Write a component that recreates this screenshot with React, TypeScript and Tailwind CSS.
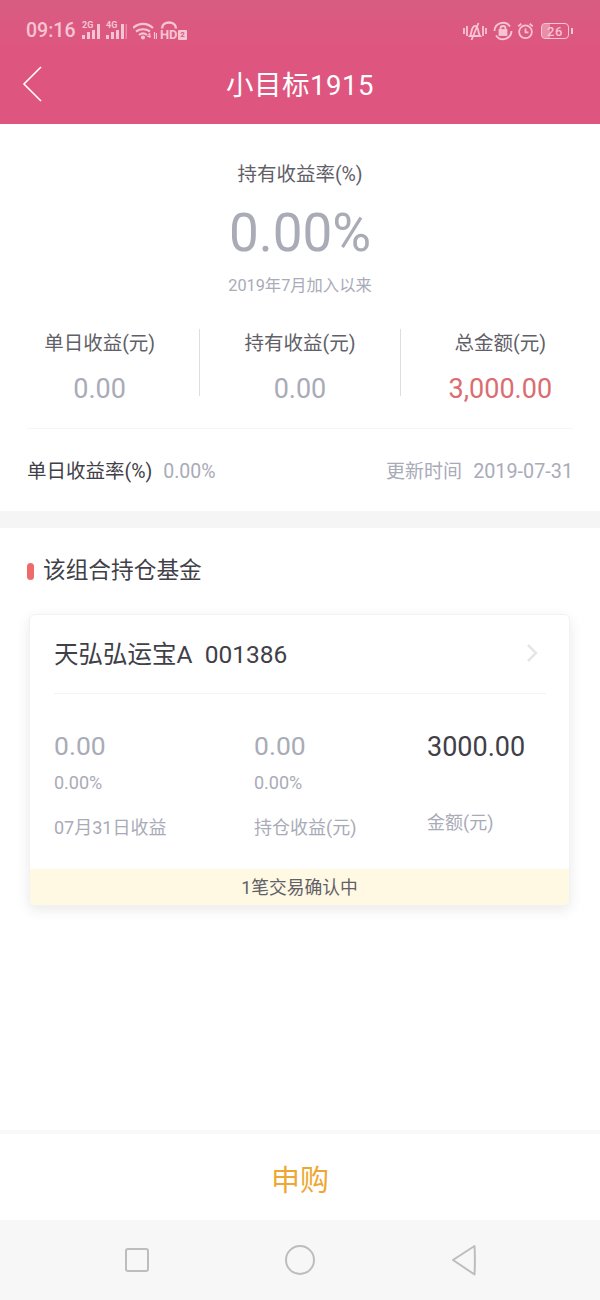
const sans = "font-['Roboto','Noto_Sans_CJK_SC',sans-serif]";

const StatCol = ({ label, value, valueColor }: { label: string; value: string; valueColor: string }) => (
  <div className="flex-1 flex flex-col items-center pt-[1px]">
    <div className="text-[19.5px] leading-[28px] text-[#5f6068]">{label}</div>
    <div className={`mt-[16px] text-[27px] leading-[30px] ${valueColor}`}>{value}</div>
  </div>
);

const StatusBars = ({ tag, spare }: { tag: string; spare?: boolean }) => (
  <div className="relative w-[21px] h-[18px]">
    <span className="absolute left-0 top-[-2px] text-[9px] leading-[10px] font-bold text-[#f6c5d3]">{tag}</span>
    <svg viewBox="0 0 21 18" className="absolute inset-0 w-[21px] h-[18px]" fill="#f6c5d3">
      <rect x="0" y="13" width="3" height="4" />
      <rect x="5" y="10" width="3" height="7" />
      <rect x="10" y="8" width="3" height="9" />
      <rect x="15" y="2" width="3" height="15" />
      {spare && <rect x="19.500" y="2" width="1.500" height="15" opacity="0.45" />}
    </svg>
  </div>
);

const App = () => {
  return (
    <div className={`w-[600px] h-[1300px] bg-white flex flex-col overflow-hidden ${sans}`}>
      {/* Status bar + title */}
      <div className="h-[124px] bg-[#de567f] shrink-0 flex flex-col">
        <div className="h-[50px] pl-[26px] pr-[27px] pt-[20px] flex justify-between items-start bg-linear-to-b from-[#d85c82] to-[#de567f]">
          <div className="flex items-center h-[22px]">
            <span className="w-[49px] text-[19.5px] leading-[22px] font-medium text-[#f6c5d3]">09:16</span>
            <div className="ml-[7px]"><StatusBars tag="2G" /></div>
            <div className="ml-[3px]"><StatusBars tag="4G" spare /></div>
            <div className="relative ml-[6px] w-[24px] h-[18px]">
              <svg viewBox="0 0 24 18" className="w-[24px] h-[18px]" fill="none" stroke="#f6c5d3" strokeWidth="2.200">
                <path d="M0 6c6-5.500 14-5.500 20 0" />
                <path d="M3 9.500c4-3 10-3 14 0" />
                <path d="M6 13c2.500-2 5.500-2 8 0" />
                <circle cx="10" cy="15.500" r="1" fill="#f6c5d3" />
                <path d="M21.500 10v7M23.500 11v6" strokeWidth="1.200" />
              </svg>
              <span className="absolute left-[14px] top-[10px] text-[7px] leading-[8px] font-bold text-[#f6c5d3]">4</span>
            </div>
            <div className="relative ml-[3px] w-[27px] h-[20px]">
              <svg viewBox="0 0 18 8" className="absolute left-0 top-0 w-[18px] h-[8px]" fill="none" stroke="#f6c5d3" strokeWidth="2.500">
                <path d="M2 7.500c0-8 14-8 14 0" />
              </svg>
              <span className="absolute left-0 bottom-[-1px] text-[13px] leading-[14px] font-bold tracking-[-0.3px] text-[#f6c5d3]">HD</span>
              <span className="absolute right-0 bottom-[1px] w-[9px] h-[10px] rounded-[1px] bg-[#f6c5d3] text-[8px] leading-[10px] text-center font-bold text-[#d95a80]">2</span>
            </div>
          </div>
          <div className="flex items-center h-[22px]">
            <svg viewBox="0 0 24 20" className="w-[24px] h-[20px]" fill="none" stroke="#f6c5d3" strokeWidth="1.800">
              <path d="M1 7v6M4 5v10M20 5v10M23 7v6" />
              <path d="M7 15c2-2 1-10 5-10s3 8 5 10zM15.500 2 8.500 19" />
            </svg>
            <svg viewBox="0 0 20 20" className="w-[20px] h-[20px] ml-[6px]" fill="none" stroke="#f6c5d3" strokeWidth="1.800">
              <path d="M17 5.500A8.500 8.500 0 0 0 1.500 10M3 14.500A8.500 8.500 0 0 0 18.500 10" />
              <rect x="6.500" y="9" width="7" height="5" fill="#f6c5d3" />
              <path d="M7.500 9V7.500a2.500 2.500 0 0 1 5 0V9" />
            </svg>
            <svg viewBox="0 0 20 20" className="w-[17px] h-[18px] ml-[4px]" fill="none" stroke="#f6c5d3" strokeWidth="2.100">
              <circle cx="10" cy="11" r="7.500" />
              <path d="M10 7v4.500h3.500M1.500 4.500 5 1.500M18.500 4.500 15 1.500" />
            </svg>
            <div className="ml-[7px] w-[28px] h-[16px] rounded-[4px] border border-[#f6c5d3] relative flex items-center justify-center">
              <div className="absolute left-0 top-0 bottom-0 w-[8px] bg-[#f6c5d3]/50 rounded-l-[3px]" />
              <span className="relative text-[13px] leading-[15px] font-medium tracking-[0.5px] text-[#f6c5d3]">26</span>
            </div>
            <div className="w-[2px] h-[6px] bg-[#f6c5d3] ml-[2px]" />
          </div>
        </div>
        <div className="relative flex-1 flex items-center justify-center">
          <svg viewBox="0 0 20 36" className="absolute left-[22px] top-[16px] w-[20px] h-[36px]" fill="none" stroke="#ffffff" strokeWidth="1.600">
            <path d="M19 1 2 18l17 17" />
          </svg>
          <span className="text-[27.5px] leading-[36px] text-white tracking-[0.5px] mb-[1px] -mt-[2px]">小目标1915</span>
        </div>
      </div>

      {/* Summary */}
      <div className="shrink-0 h-[387px] px-[27px] flex flex-col">
        <div className="flex flex-col items-center">
          <div className="mt-[37px] text-[19.5px] leading-[28px] text-[#5f6068]">持有收益率(%)</div>
          <div className="mt-[13px] text-[53px] leading-[62px] text-[#a9abb7]">0.00%</div>
          <div className="mt-[10px] text-[16.300px] leading-[24px] text-[#a9abb7]">2019年7月加入以来</div>
        </div>
        <div className="mt-[31px] flex -mx-[27px] h-[67px]">
          <StatCol label="单日收益(元)" value="0.00" valueColor="text-[#a9abb7]" />
          <div className="w-px h-[67px] bg-[#dedede]" />
          <StatCol label="持有收益(元)" value="0.00" valueColor="text-[#a9abb7]" />
          <div className="w-px h-[67px] bg-[#dedede]" />
          <StatCol label="总金额(元)" value="3,000.00" valueColor="text-[#db6d70]" />
        </div>
        <div className="mt-[32px] h-px bg-[#f6f6f6]" />
        <div className="mt-[29px] flex items-center justify-between">
          <div className="flex items-center">
            <span className="text-[19.5px] leading-[28px] text-[#3f4048]">单日收益率(%)</span>
            <span className="ml-[11px] text-[19.500px] leading-[28px] text-[#a9abb7]">0.00%</span>
          </div>
          <div className="flex items-center text-[#a9abb7]">
            <span className="text-[19px] leading-[28px]">更新时间</span>
            <span className="ml-[11px] text-[19.800px] leading-[28px]">2019-07-31</span>
          </div>
        </div>
      </div>

      <div className="h-[17px] shrink-0 bg-[#f5f5f5]" />

      {/* Holdings */}
      <div className="flex-1 px-[27px] relative">
        <div className="mt-[27px] flex items-center">
          <div className="w-[7px] h-[17px] rounded-full bg-[#ef6b6b]" />
          <span className="ml-[9px] text-[22.700px] leading-[32px] text-[#3f4048]">该组合持仓基金</span>
        </div>
        <div className="mt-[27px] ml-[2px] mr-[3px] rounded-[6px] bg-white border border-[#f2f2f2] shadow-[0_4px_14px_rgba(0,0,0,0.09)] overflow-hidden">
          <div className="ml-[24px] mr-[23px] h-[79px] border-b border-[#f3f3f3] flex items-center justify-between">
            <span className="text-[24.500px] leading-[34px] text-[#3f4048] mt-[2px]">天弘弘运宝A&nbsp;&nbsp;001386</span>
            <svg viewBox="0 0 12 20" className="w-[12px] h-[20px] mr-[8px] -mt-[3px]" fill="none" stroke="#e6e6e6" strokeWidth="2.500">
              <path d="M2 2l8 8-8 8" />
            </svg>
          </div>
          <div className="h-[175px] flex pl-[24px] pt-[36px]">
            <div className="w-[200px]">
              <div className="text-[26.500px] leading-[32px] text-[#a9abb7]">0.00</div>
              <div className="mt-[9px] text-[18px] leading-[24px] text-[#a9abb7]">0.00%</div>
              <div className="mt-[21px] text-[18px] leading-[24px] text-[#a9abb7]">07月31日收益</div>
            </div>
            <div className="w-[173px]">
              <div className="text-[26.500px] leading-[32px] text-[#a9abb7]">0.00</div>
              <div className="mt-[9px] text-[18px] leading-[24px] text-[#a9abb7]">0.00%</div>
              <div className="mt-[21px] text-[18px] leading-[24px] text-[#a9abb7]">持仓收益(元)</div>
            </div>
            <div>
              <div className="text-[27px] leading-[32px] text-[#3f4048] pt-[1px]">3000.00</div>
              <div className="mt-[48px] text-[18px] leading-[24px] text-[#a9abb7]">金额(元)</div>
            </div>
          </div>
          <div className="h-[36px] bg-[#fff9e3] flex items-center justify-center pt-[3px] text-[17.800px] text-[#5f6068]">1笔交易确认中</div>
        </div>
      </div>

      {/* Purchase button */}
      <div className="h-[90px] shrink-0 border-t-[4px] border-[#f8f8f8] bg-white flex items-center justify-center pt-[8px]">
        <span className="text-[29px] leading-[40px] text-[#efa733]">申购</span>
      </div>

      {/* Navigation bar */}
      <div className="h-[80px] shrink-0 bg-[#f7f7f7] flex items-center justify-center">
        <div className="flex items-center gap-[136px] ml-[2px]">
          <div className="w-[24px] h-[24px] rounded-[3px] border-2 border-[#bdbdbd]" />
          <div className="w-[30px] h-[30px] rounded-full border-2 border-[#bdbdbd]" />
          <svg viewBox="0 0 26 32" className="w-[26px] h-[32px]" fill="none" stroke="#bdbdbd" strokeWidth="2" strokeLinejoin="round">
            <path d="M23.500 2 2 16l21.500 14.500c.5-9 .5-20 0-28.500z" />
          </svg>
        </div>
      </div>
    </div>
  );
};

export default App;
